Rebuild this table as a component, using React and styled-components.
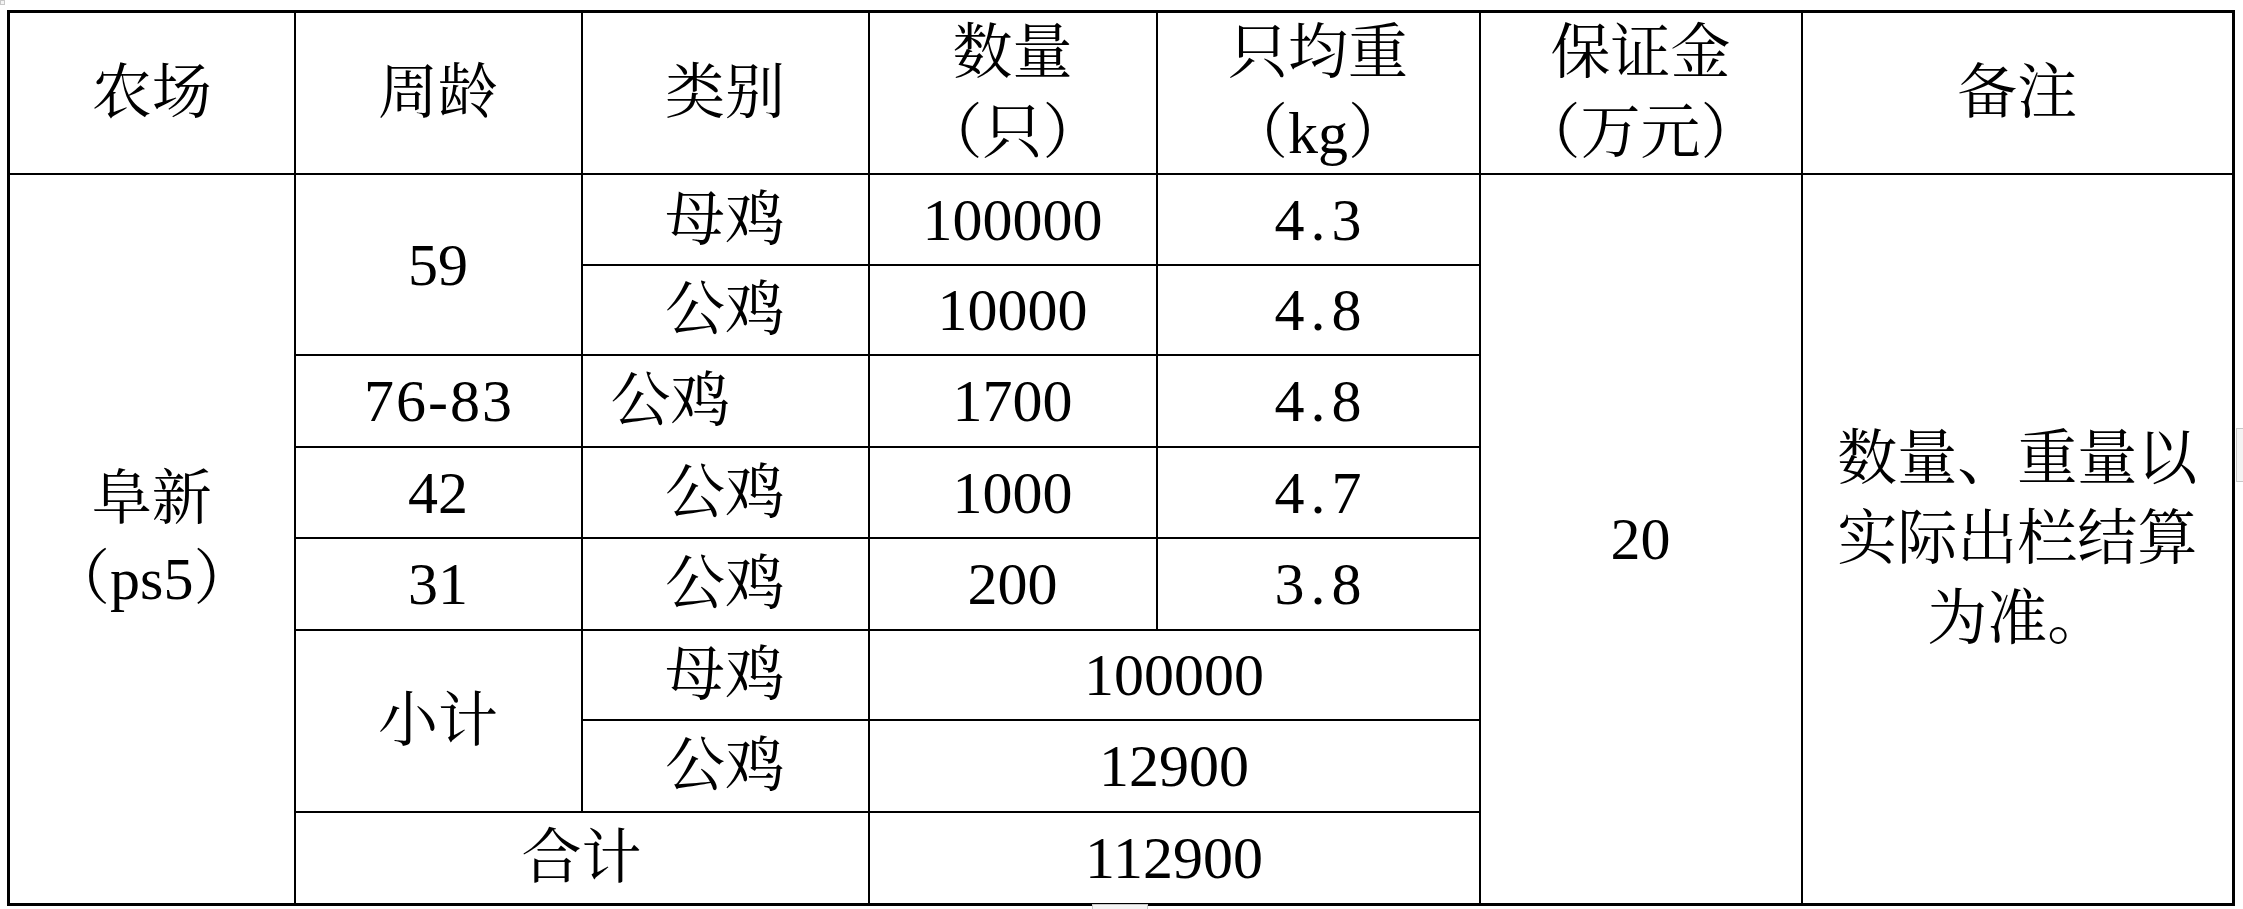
import React from "react";
import styled, { createGlobalStyle } from "styled-components";

const fontStack = `"Liberation Serif", "Noto Serif CJK SC", "Noto Sans CJK SC", serif`;

const GlobalStyle = createGlobalStyle`
  html, body {
    margin: 0;
    background: #fff;
  }
  body {
    font-family: ${fontStack};
    color: #000;
  }
`;

const Page = styled.div`
  position: relative;
  width: 2243px;
  height: 909px;
  padding: 10px 0 0 7px;
  box-sizing: border-box;
  overflow: hidden;
`;

const Sheet = styled.table`
  border-collapse: collapse;
  table-layout: fixed;
  width: 2227px;
  border: 3px solid #000;
  font-family: ${fontStack};
`;

const Row = styled.tr`
  height: ${p => p.$h}px;
`;

const Cell = styled.td`
  border: 2px solid #000;
  padding: 0 0 0 ${p => p.$indent || 0}px;
  text-align: ${p => p.$align || "center"};
  vertical-align: middle;
  font-family: ${fontStack};
  font-size: 60px;
  line-height: 80px;
  font-weight: 400;
  color: #000;
  white-space: nowrap;
`;

const Line = styled.span`
  display: block;
`;

const Num = styled.span`
  font-family: "Liberation Serif", "Times New Roman", serif;
  letter-spacing: ${p => p.$spacing}px;
  margin-right: ${p => -p.$spacing}px;
`;

// word-style table handles
const Handle = styled.div`
  position: absolute;
  background: #f4f4f4;
  border: 1px solid #c8c8c8;
  box-sizing: border-box;
`;

const cols = [286, 287, 287, 288, 323, 322, 432];

const n = v => {
  const s = String(v);
  const spacing = s.includes(".") ? 6 : s.includes("-") ? 2 : 0;
  return <Num $spacing={spacing}>{s}</Num>;
};

const App = () => {
  return (
    <Page>
      <GlobalStyle />
      <Sheet>
        <colgroup>
          {cols.map((w, i) => (
            <col key={i} style={{ width: w }} />
          ))}
        </colgroup>
        <thead>
          <Row $h={161}>
            <Cell as="th">农场</Cell>
            <Cell as="th">周龄</Cell>
            <Cell as="th">类别</Cell>
            <Cell as="th">
              <Line>数量</Line>
              <Line>（只）</Line>
            </Cell>
            <Cell as="th">
              <Line>只均重</Line>
              <Line>（kg）</Line>
            </Cell>
            <Cell as="th">
              <Line>保证金</Line>
              <Line>（万元）</Line>
            </Cell>
            <Cell as="th">备注</Cell>
          </Row>
        </thead>
        <tbody>
          <Row $h={91}>
            <Cell rowSpan={8}>
              <Line>阜新</Line>
              <Line>（ps5）</Line>
            </Cell>
            <Cell rowSpan={2}>{n(59)}</Cell>
            <Cell>母鸡</Cell>
            <Cell>{n(100000)}</Cell>
            <Cell>{n("4.3")}</Cell>
            <Cell rowSpan={8}>{n(20)}</Cell>
            <Cell rowSpan={8}>
              <Line>数量、重量以</Line>
              <Line>实际出栏结算</Line>
              <Line>为准。</Line>
            </Cell>
          </Row>
          <Row $h={90}>
            <Cell>公鸡</Cell>
            <Cell>{n(10000)}</Cell>
            <Cell>{n("4.8")}</Cell>
          </Row>
          <Row $h={92}>
            <Cell>{n("76-83")}</Cell>
            <Cell $align="left" $indent={28}>
              公鸡
            </Cell>
            <Cell>{n(1700)}</Cell>
            <Cell>{n("4.8")}</Cell>
          </Row>
          <Row $h={91}>
            <Cell>{n(42)}</Cell>
            <Cell>公鸡</Cell>
            <Cell>{n(1000)}</Cell>
            <Cell>{n("4.7")}</Cell>
          </Row>
          <Row $h={92}>
            <Cell>{n(31)}</Cell>
            <Cell>公鸡</Cell>
            <Cell>{n(200)}</Cell>
            <Cell>{n("3.8")}</Cell>
          </Row>
          <Row $h={90}>
            <Cell rowSpan={2}>小计</Cell>
            <Cell>母鸡</Cell>
            <Cell colSpan={2}>{n(100000)}</Cell>
          </Row>
          <Row $h={92}>
            <Cell>公鸡</Cell>
            <Cell colSpan={2}>{n(12900)}</Cell>
          </Row>
          <Row $h={92}>
            <Cell colSpan={2}>合计</Cell>
            <Cell colSpan={2}>{n(112900)}</Cell>
          </Row>
        </tbody>
      </Sheet>
      <Handle style={{ left: 0, top: 0, width: 5, height: 5 }} />
      <Handle style={{ left: 2236, top: 428, width: 12, height: 54 }} />
      <Handle style={{ left: 1092, top: 904, width: 56, height: 8 }} />
    </Page>
  );
};

export default App;
